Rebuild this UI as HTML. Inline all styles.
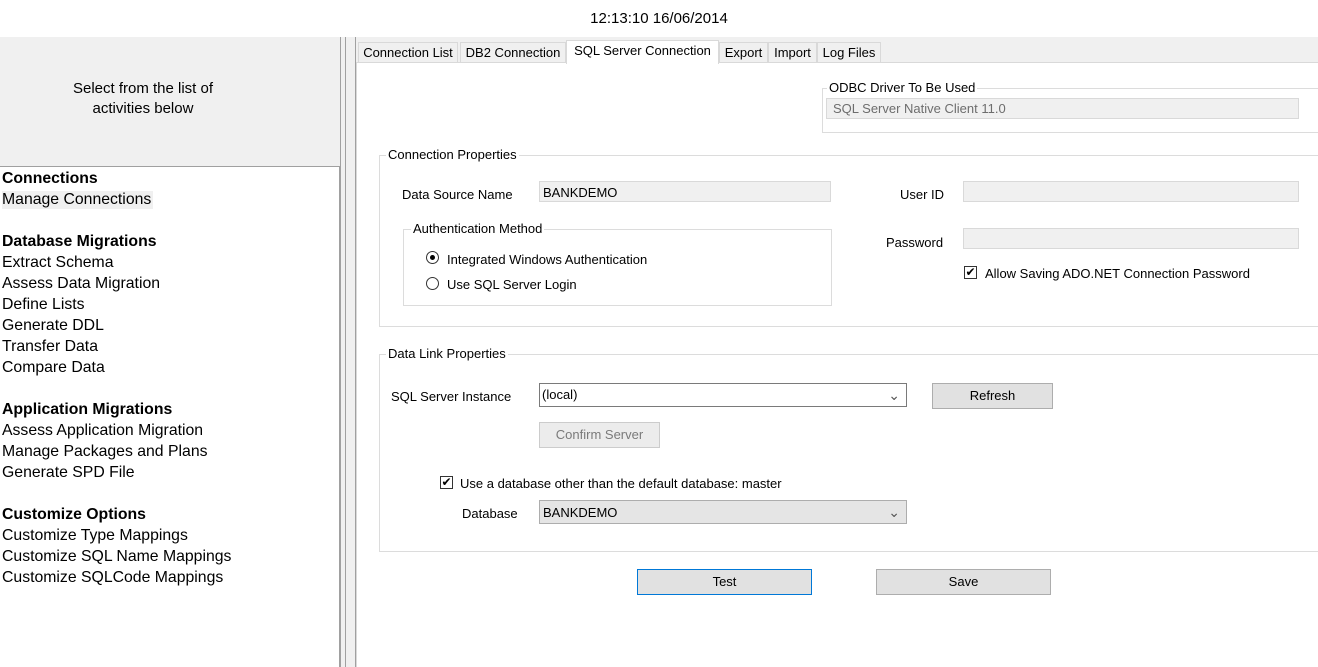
<!DOCTYPE html><html><head><style>
*{margin:0;padding:0;box-sizing:border-box}
body{width:1318px;height:667px;position:relative;background:#fff;font-family:"Liberation Sans",sans-serif;font-size:13px;color:#000;overflow:hidden}
.a{position:absolute}
.fs{position:absolute;border:1px solid #dcdcdc}
.lg{position:absolute;background:#fff;padding:0 2px;top:-9px;left:6px}
.tb{position:absolute;border:1px solid #d9d9d9;background:#f0f0f0;height:21px}
.btn{position:absolute;border:1px solid #adadad;background:#e1e1e1;text-align:center;line-height:24px}
.cb{position:absolute;width:13px;height:13px;border:1px solid #333;background:#fff;font-size:12px;line-height:11px;text-align:center}
.rd{position:absolute;width:13px;height:13px;border:1px solid #333;border-radius:50%;background:#fff}
.lp div{position:absolute;left:2px;font-size:15.8px}
.lp b{font-weight:bold}
.tab{position:absolute;top:42px;height:21px;border:1px solid #d9d9d9;background:#f0f0f0;line-height:20px;text-align:center}
.dd{position:absolute;font-size:14px;color:#555}
</style></head><body>
<div class="a" style="top:10px;left:0;width:1318px;text-align:center;font-size:15px">12:13:10 16/06/2014</div>
<div class="a" style="top:37px;left:0;width:340px;height:130px;background:#f0f0f0"></div>
<div class="a" style="top:79px;left:0;width:286px;text-align:center;font-size:15px;line-height:20px">Select from the list of<br>activities below</div>
<div class="a" style="top:166px;left:0;width:340px;height:501px;border-top:1px solid #a0a0a0;border-right:1px solid #a0a0a0"></div>
<div class="a" style="top:37px;left:340px;width:16px;height:630px;background:#f0f0f0;border-left:1px solid #a0a0a0"></div>
<div class="a" style="top:37px;left:345px;width:1px;height:630px;background:#a0a0a0"></div>
<div class="a" style="top:37px;left:355px;width:1px;height:630px;background:#a0a0a0"></div>
<div class="a" style="top:37px;left:356px;width:962px;height:26px;background:#f0f0f0"></div>
<div class="lp">
<div style="top:170px"><b>Connections</b></div>
<div style="top:191px;background:#f0f0f0;padding-right:2px">Manage Connections</div>
<div style="top:233px"><b>Database Migrations</b></div>
<div style="top:254px">Extract Schema</div><div style="top:275px">Assess Data Migration</div><div style="top:296px">Define Lists</div><div style="top:317px">Generate DDL</div><div style="top:338px">Transfer Data</div><div style="top:359px">Compare Data</div>
<div style="top:401px"><b>Application Migrations</b></div>
<div style="top:422px">Assess Application Migration</div><div style="top:443px">Manage Packages and Plans</div><div style="top:464px">Generate SPD File</div>
<div style="top:506px"><b>Customize Options</b></div>
<div style="top:527px">Customize Type Mappings</div><div style="top:548px">Customize SQL Name Mappings</div><div style="top:569px">Customize SQLCode Mappings</div>
</div>
<div class="a" style="top:62px;left:356px;width:962px;height:605px;background:#fff;border-top:1px solid #d9d9d9;border-left:1px solid #d9d9d9"></div>
<div class="tab" style="left:358px;width:100px">Connection List</div>
<div class="tab" style="left:460px;width:106px">DB2 Connection</div>
<div class="tab" style="left:566px;top:40px;height:24px;width:153px;background:#fff;border-bottom:none">SQL Server Connection</div>
<div class="tab" style="left:719px;width:49px">Export</div>
<div class="tab" style="left:768px;width:49px">Import</div>
<div class="tab" style="left:817px;width:64px">Log Files</div>
<div class="fs" style="top:88px;left:822px;width:500px;height:45px"><span class="lg" style="left:4px">ODBC Driver To Be Used</span></div>
<div class="tb" style="top:98px;left:826px;width:473px;color:#6d6d6d;padding:2px 6px">SQL Server Native Client 11.0</div>
<div class="fs" style="top:155px;left:379px;width:945px;height:172px"><span class="lg">Connection Properties</span></div>
<div class="a" style="top:187px;left:402px">Data Source Name</div>
<div class="tb" style="top:181px;left:539px;width:292px;padding:3px 3px">BANKDEMO</div>
<div class="a" style="top:187px;left:900px">User ID</div>
<div class="tb" style="top:181px;left:963px;width:336px"></div>
<div class="a" style="top:235px;left:886px">Password</div>
<div class="tb" style="top:228px;left:963px;width:336px"></div>
<div class="cb" style="top:266px;left:964px">✔</div>
<div class="a" style="top:266px;left:985px">Allow Saving ADO.NET Connection Password</div>
<div class="fs" style="top:229px;left:403px;width:429px;height:77px"><span class="lg" style="left:7px">Authentication Method</span></div>
<div class="rd" style="top:251px;left:426px"><div style="position:absolute;left:3px;top:3px;width:5px;height:5px;border-radius:50%;background:#000"></div></div>
<div class="a" style="top:252px;left:447px">Integrated Windows Authentication</div>
<div class="rd" style="top:277px;left:426px"></div>
<div class="a" style="top:277px;left:447px">Use SQL Server Login</div>
<div class="fs" style="top:354px;left:379px;width:945px;height:198px"><span class="lg">Data Link Properties</span></div>
<div class="a" style="top:389px;left:391px">SQL Server Instance</div>
<div class="a" style="top:383px;left:539px;width:368px;height:24px;border:1px solid #7a7a7a;background:#fff;padding:3px 2px">(local)<span class="dd" style="right:6px;top:3px">⌄</span></div>
<div class="btn" style="top:383px;left:932px;width:121px;height:26px">Refresh</div>
<div class="btn" style="top:422px;left:539px;width:121px;height:26px;border-color:#ccc;background:#ececec;color:#7a7a7a">Confirm Server</div>
<div class="cb" style="top:476px;left:440px">✔</div>
<div class="a" style="top:476px;left:460px">Use a database other than the default database: master</div>
<div class="a" style="top:506px;left:462px">Database</div>
<div class="a" style="top:500px;left:539px;width:368px;height:24px;border:1px solid #adadad;background:#e5e5e5;padding:4px 3px">BANKDEMO<span class="dd" style="right:6px;top:3px">⌄</span></div>
<div class="btn" style="top:569px;left:637px;width:175px;height:26px;border-color:#0078d7">Test</div>
<div class="btn" style="top:569px;left:876px;width:175px;height:26px">Save</div>
</body></html>
